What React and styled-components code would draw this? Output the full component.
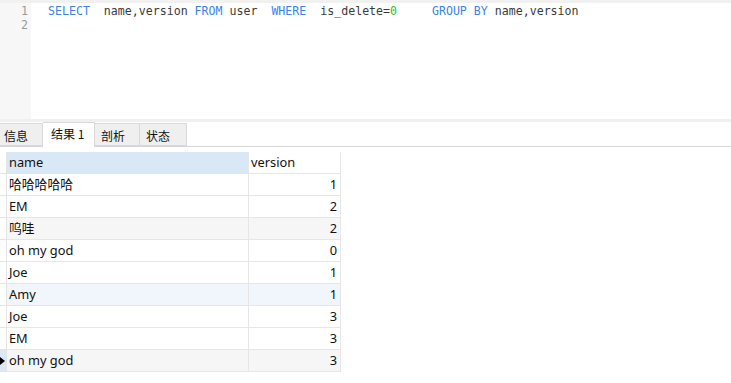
import React from "react";
import styled, { createGlobalStyle } from "styled-components";

const Global = createGlobalStyle`
  html, body { margin: 0; padding: 0; background: #fff; }
  body { width: 731px; height: 383px; overflow: hidden; }
`;

const Page = styled.div`
  width: 731px;
  height: 383px;
  display: flex;
  flex-direction: column;
  background: #fff;
  font-family: "Noto Sans", "Noto Sans CJK SC", sans-serif;
`;

const TopBand = styled.div`
  height: 3px;
  background: #f1f1f1;
`;

const Editor = styled.div`
  height: 116px;
  display: flex;
  background: #fff;
`;

const Gutter = styled.div`
  width: 31px;
  background: #f7f7f7;
  padding-top: 1px;
  box-sizing: border-box;
`;

const LineNo = styled.div`
  height: 14px;
  line-height: 14px;
  font-family: "DejaVu Sans Mono", monospace;
  font-size: 11.6px;
  color: #9a9a9a;
  text-align: right;
  padding-right: 3px;
`;

const Code = styled.div`
  flex: 1;
  padding: 1px 0 0 17px;
  font-family: "DejaVu Sans Mono", monospace;
  font-size: 11.6px;
  white-space: pre;
`;

const CodeLine = styled.div`
  height: 14px;
  line-height: 14px;
  color: #3a3a3a;
`;

const Tok = styled.span`
  color: ${(p) => (p.$kind === "kw" ? "#3b83e6" : p.$kind === "num" ? "#26c226" : "#3a3a3a")};
`;

const Separator = styled.div`
  height: 3px;
  background: #f0f0f0;
`;

const TabBar = styled.div`
  height: 24px;
  display: flex;
  align-items: flex-end;
  border-bottom: 1px solid #d6d6d6;
  margin-left: -3px;
`;

const Tab = styled.div`
  box-sizing: border-box;
  width: ${(p) => p.$w}px;
  height: ${(p) => (p.$active ? 25 : 23)}px;
  margin-bottom: ${(p) => (p.$active ? -1 : 0)}px;
  padding-left: ${(p) => (p.$active ? 8 : 6)}px;
  padding-top: ${(p) => (p.$active ? 2 : 3)}px;
  background: ${(p) => (p.$active ? "#fff" : "#efefef")};
  border: 1px solid #d9d9d9;
  border-bottom: ${(p) => (p.$active ? "none" : "1px solid #d9d9d9")};
  border-left: ${(p) => (p.$first ? "1px solid #d9d9d9" : "none")};
  font-size: 12px;
  line-height: 17px;
  color: #111;
  font-family: "Noto Sans CJK SC", "Noto Sans", sans-serif;
`;

const Grid = styled.div`
  margin-top: 5px;
  display: flex;
  flex-direction: column;
  width: 341px;
`;

const Row = styled.div`
  display: grid;
  grid-template-columns: 7px 242px 92px;
  height: 22px;
  background: ${(p) => p.$bg || "#fff"};
`;

const Indicator = styled.div`
  border-right: 1px solid #e4e4e4;
  border-bottom: 1px solid #e4e4e4;
  background: ${(p) => (p.$current ? "#dbe9f6" : "#fff")};
  position: relative;
  overflow: hidden;
`;

const Arrow = styled.div`
  position: absolute;
  left: 0;
  top: 7px;
  width: 0;
  height: 0;
  border-top: 4px solid transparent;
  border-bottom: 4px solid transparent;
  border-left: 5px solid #000;
`;

const Cell = styled.div`
  box-sizing: border-box;
  border-right: 1px solid #e6e6e6;
  border-bottom: 1px solid #e6e6e6;
  padding: 0 ${(p) => (p.$right ? 3 : 2)}px 0 2px;
  line-height: 21px;
  font-size: 12.8px;
  color: #111;
  text-align: ${(p) => (p.$right ? "right" : "left")};
  background: ${(p) => p.$bg || "transparent"};
  white-space: nowrap;
  overflow: hidden;
  font-family: "Noto Sans", "Noto Sans CJK SC", sans-serif;
`;

const rows = [
  ["哈哈哈哈哈", 1],
  ["EM", 2],
  ["呜哇", 2, "#f6f6f6"],
  ["oh my god", 0],
  ["Joe", 1],
  ["Amy", 1, "#f0f6fc"],
  ["Joe", 3],
  ["EM", 3],
  ["oh my god", 3, "#f6f6f6", true],
];

const sql = [
  ["SELECT", "kw"],
  ["  name,version ", ""],
  ["FROM", "kw"],
  [" user  ", ""],
  ["WHERE", "kw"],
  ["  is_delete=", ""],
  ["0", "num"],
  ["     ", ""],
  ["GROUP BY", "kw"],
  [" name,version", ""],
];

export default function App() {
  return (
    <Page>
      <Global />
      <TopBand />
      <Editor>
        <Gutter>
          <LineNo>1</LineNo>
          <LineNo>2</LineNo>
        </Gutter>
        <Code>
          <CodeLine>
            {sql.map(([t, k], i) => (
              <Tok key={i} $kind={k}>{t}</Tok>
            ))}
          </CodeLine>
          <CodeLine />
        </Code>
      </Editor>
      <Separator />
      <TabBar>
        <Tab $w={46} $first>信息</Tab>
        <Tab $w={52} $active>结果 1</Tab>
        <Tab $w={45}>剖析</Tab>
        <Tab $w={47}>状态</Tab>
      </TabBar>
      <Grid>
        <Row>
          <Indicator />
          <Cell $bg="#d9e8f6">name</Cell>
          <Cell>version</Cell>
        </Row>
        {rows.map(([name, v, bg, cur], i) => (
          <Row key={i} $bg={bg}>
            <Indicator $current={cur}>{cur && <Arrow />}</Indicator>
            <Cell>{name}</Cell>
            <Cell $right>{v}</Cell>
          </Row>
        ))}
      </Grid>
    </Page>
  );
}
